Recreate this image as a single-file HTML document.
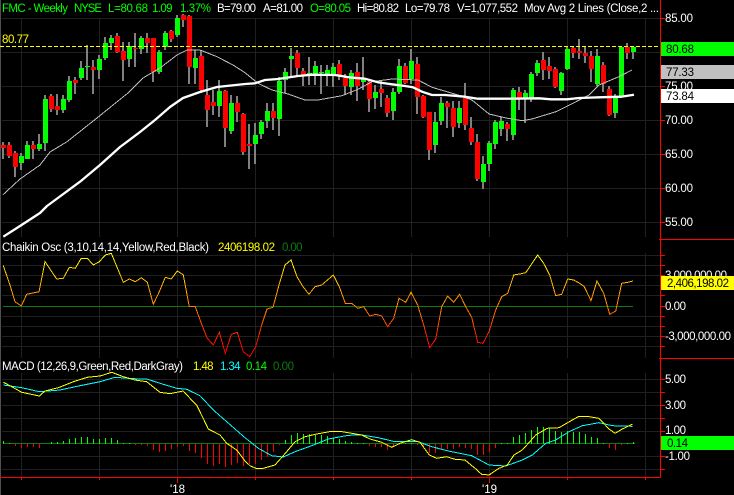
<!DOCTYPE html>
<html><head><meta charset="utf-8"><title>FMC Weekly</title>
<style>
html,body{margin:0;padding:0;background:#000;width:734px;height:495px;overflow:hidden}
svg{display:block}
text{font-family:"Liberation Sans",Arial,sans-serif;font-size:11.5px;fill:#fff}
.g{fill:#00ff00}.y{fill:#ffff00}.c{fill:#00ffff}.d{fill:#0a7a0a}.k{fill:#000}
</style></head><body>
<svg width="734" height="495" viewBox="0 0 734 495" xmlns="http://www.w3.org/2000/svg">
<defs><linearGradient id="ch" gradientUnits="userSpaceOnUse" x1="0" y1="255" x2="0" y2="350">
<stop offset="0" stop-color="#ffff00"/><stop offset=".21" stop-color="#ffc800"/><stop offset=".42" stop-color="#ff9a00"/><stop offset=".63" stop-color="#ff6a00"/><stop offset=".84" stop-color="#ff2000"/><stop offset="1" stop-color="#ff0000"/></linearGradient></defs>
<rect width="734" height="495" fill="#000"/>
<rect x="0" y="0" width="1" height="495" fill="#505050"/>
<!-- grid -->
<path shape-rendering="crispEdges" fill="none" stroke="#202020" stroke-width="1" d="
M2 18.5H660M2 52.5H660M2 86.5H660M2 120.5H660M2 154.5H660M2 188.5H660M2 222.5H660
M21.5 18V237M99.5 18V237M177.5 18V237M255.5 18V237M333.5 18V237M411.5 18V237M489.5 18V237M567.5 18V237M645.5 18V237
M2 255.5H660M2 265.5H660M2 275.5H660M2 285.5H660M2 295.5H660M2 316.5H660M2 326.5H660M2 336.5H660M2 346.5H660
M21.5 253V358M99.5 253V358M177.5 253V358M255.5 253V358M333.5 253V358M411.5 253V358M489.5 253V358M567.5 253V358M645.5 253V358
M2 379.5H660M2 392.5H660M2 405.5H660M2 418.5H660M2 431.5H660M2 456.5H660M2 469.5H660
M21.5 373V477M99.5 373V477M177.5 373V477M255.5 373V477M333.5 373V477M411.5 373V477M489.5 373V477M567.5 373V477M645.5 373V477"/>
<!-- wicks -->
<path shape-rendering="crispEdges" fill="none" stroke="#808080" stroke-width="2" d="
M3 142V159M9 142V158M15 151V177M21 153V170M27 141V159M33 141V159M39 134V151M45 95V151M51 94V112M57 94V115M63 95V113M69 76V102M75 77V94M81 61V80M87 45V80M93 60V94M99 55V79M105 37V60M111 35V50M117 33V53M123 42V81M129 42V67M135 33V67M141 36V54M147 33V53M153 38V82M159 50V74M165 31V50M171 30V42M177 15V37M183 14V27M189 15V84M195 50V84M201 50V93M207 80V127M213 90V115M219 80V117M225 90V147M231 95V134M237 96V122M243 113V155
M249 124V169M255 123V164M261 120V139M267 103V128M273 103V130M279 77V136M285 68V93M291 48V77M297 50V76M303 68V86M309 57V85M315 61V85M321 65V94M327 65V86M333 63V87M339 60V80M345 74V95M351 70V95M357 63V101M363 57V90M369 80V112M375 85V109M381 80V107M387 95V117M393 88V120M399 59V94M405 63V84M411 49V84M417 57V114M423 95V118M429 112V160M435 112V153M441 97V125M447 101V128M453 101V137M459 101V128M465 83V130M471 117V145M477 134V181M483 156V189M489 141V171M495 120V149M501 117V136M507 122V141M513 88V140M519 87V110M525 90V123M531 72V102M537 60V76M543 52V80M549 57V79M555 67V88M561 72V95M567 46V70M573 46V58M579 39V59M585 47V63M591 51V82M597 49V86M603 62V92M609 86V116M615 94V118M621 47V98M627 43V59M633 46V59"/>
<!-- red bodies -->
<path shape-rendering="crispEdges" fill="none" stroke="#ff0000" stroke-width="5" d="
M3.5 145V148M9.5 145V156M15.5 153V167M33.5 145V149M51.5 96V109M57.5 106V110M75.5 80V83M93.5 67V70M117.5 36V52M123.5 51V60M135.5 48V49M147.5 38V43M153.5 38V72M171.5 31V39M183.5 15V20M189.5 16V67M201.5 56V90M207.5 95V110M213.5 102V106M225.5 91V128M237.5 103V112M243.5 114V152M249.5 144V146M273.5 111V118M297.5 53V68M303.5 71V75M339.5 64V75M345.5 78V86M357.5 72V86M369.5 82V99M381.5 89V93M387.5 98V113M405.5 66V83M417.5 64V97M423.5 96V117M429.5 112V150M447.5 103V107M453.5 108V127M465.5 98V125M471.5 128V142M477.5 142V179M507.5 124V129M519.5 92V98M543.5 60V70M549.5 66V71M555.5 69V87M573.5 48V53M579.5 51V53M585.5 53V56M591.5 56V69M603.5 65V84M609.5 89V115M627.5 47V53"/>
<!-- green bodies -->
<path shape-rendering="crispEdges" fill="none" stroke="#00ff00" stroke-width="5" d="
M21.5 156V163M27.5 145V159M39.5 144V149M45.5 99V143M63.5 99V110M69.5 81V100M81.5 68V78M87.5 66V67M99.5 59V70M105.5 43V58M111.5 38V43M129.5 46V59M141.5 38V49M159.5 52V72M165.5 33V47M177.5 18V35M195.5 58V68M219.5 91V106M231.5 103V131M255.5 135V144M261.5 122V134M267.5 111V121M279.5 81V119M285.5 72V80M291.5 56V59M309.5 73V75M315.5 66V74M321.5 72V73M327.5 70V75M333.5 67V75M351.5 73V87M363.5 79V82M375.5 92V98M393.5 92V111M399.5 66V92M411.5 61V79M435.5 122V145M441.5 103V121M459.5 108V123M483.5 164V182M489.5 143V164M495.5 122V144M501.5 121V129M513.5 90V135M525.5 93V98M531.5 74V98M537.5 63V73M561.5 73V91M567.5 49V69M597.5 56V84M615.5 97V113M621.5 47V96M633.5 47V52"/>
<!-- thin MA -->
<polyline fill="none" stroke="#c0c0c0" stroke-width="1" shape-rendering="crispEdges" points="3,194.7 20,179 40,165 50,152 67,141.7 97,118 113,105 128,93 143,78 160,68 177,55 187,50 200,50 217,56.7 233,65 245,72.7 258,83.3 272,90 288,94 305,100 318,100 342,95.7 358,89.3 372,81.7 392,79 418,80 432,87.3 458,95 472,100 489,114 506,118 522,120.7 532,119 556,111.7 576,101.7 589,95 599,85 619,76.7 632,70"/>
<!-- thick MA -->
<polyline fill="none" stroke="#ffffff" stroke-width="2.3" stroke-linejoin="round" points="3.3,236.7 20,226 40,213 47,206 80,181.7 100,165 120,147 140,132 155,120 170,107 183,98 200,92 217,87 245,84 255,83.3 265,80 278,79 298,76 312,74.7 335,75 352,77.7 365,78.7 378,82.3 392,84.3 405,86 413,87.3 422,91.7 432,95 445,95 465,96.7 478,98.7 489,98.7 509,98.7 539,98.3 551,99.3 567,99.3 579,98 599,97.3 621,96.7 634,94.7"/>
<!-- dashed -->
<line x1="0" y1="46.5" x2="660" y2="46.5" stroke="#ffff00" stroke-width="1" stroke-dasharray="4 2" shape-rendering="crispEdges"/>
<!-- header -->
<text class="g" x="2" y="12" textLength="66">FMC - Weekly</text>
<text class="g" x="74" y="12" textLength="28">NYSE</text>
<text class="g" x="108" y="12" textLength="40">L=80.68</text>
<text class="g" x="152" y="12" textLength="20.5">1.09</text>
<text class="g" x="180" y="12" textLength="31">1.37%</text>
<text x="217" y="12" textLength="39">B=79.00</text>
<text x="263" y="12" textLength="40">A=81.00</text>
<text class="g" x="310" y="12" textLength="41">O=80.05</text>
<text x="357" y="12" textLength="42">Hi=80.82</text>
<text x="405" y="12" textLength="45">Lo=79.78</text>
<text x="457" y="12" textLength="61">V=1,077,552</text>
<text x="524" y="12" textLength="135">Mov Avg 2 Lines (Close,2 ...</text>
<text class="y" x="2" y="43" textLength="27">80.77</text>
<!-- pane 2 -->
<text x="2" y="251" textLength="207">Chaikin Osc (3,10,14,14,Yellow,Red,Black)</text>
<text class="y" x="218" y="251" textLength="57">2406198.02</text>
<text class="d" x="282" y="251" textLength="20.5">0.00</text>
<line x1="3" y1="306.5" x2="633" y2="306.5" stroke="#0a7a0a" stroke-width="1" shape-rendering="crispEdges"/>
<polyline fill="none" stroke="url(#ch)" stroke-width="1" shape-rendering="crispEdges" points="3.3,265.7 10,285 15,301.7 21.3,306 26.7,294.3 39,291.7 45,261.7 56.7,279 63.3,278.3 69.3,267.3 75.3,268.3 81.3,258.3 87.3,258.3 93.3,265 99.3,261.7 105.3,255 111.3,253.3 123.3,282.3 129.3,279 135.3,281.7 141.3,277.7 147.3,282.3 153.3,304.3 159.3,291.7 165.3,277.3 171.3,279 177.3,271 183.3,275 189.3,306.7 195.3,306.7 201.3,323.3 207.3,338.3 213.3,345 219.3,332.3 225.3,353.3 231.3,334.3 237.3,332.3 243.3,351.7 249.7,356.7 255.7,346.7 261.7,325 267,309 273,307.3 279,285 285,265 291,260 297,276.7 303,286.7 309,294.3 315,286.7 321.7,285 333.3,275 339.3,286.7 345.3,303.3 351.7,303.3 357.7,308.3 363.7,306.7 369.7,316 375.7,314.3 381.7,316 387.7,326.7 393.7,318.3 399,298.3 405.7,302.3 411,292.3 417.7,305 423.7,325 429.7,347.7 435.7,339 441.7,306.7 447.7,296 453.7,302.3 459.7,294.3 465.7,306.7 471.7,317.3 477.7,342.3 483,343.3 489,331.7 495.7,310 501.7,296.7 507.7,293.3 513.7,275 519.7,274 525.7,272.7 537.7,255 543.7,263.3 549.7,275 555.7,295.7 561.7,294.3 567.7,279 573.7,280 579.7,283.3 584.3,286.7 591,300.7 597,281 603.7,293.3 609.7,314.3 615.7,311 621.7,283.3 627.7,282.3 633,281"/>
<!-- pane 3 -->
<text x="2" y="370" textLength="181">MACD (12,26,9,Green,Red,DarkGray)</text>
<text class="y" x="193" y="370" textLength="20.5">1.48</text>
<text class="c" x="220" y="370" textLength="20.5">1.34</text>
<text class="g" x="246" y="370" textLength="21">0.14</text>
<text class="d" x="273" y="370" textLength="21">0.00</text>
<line x1="3" y1="443.5" x2="635" y2="443.5" stroke="#0a7a0a" stroke-width="1" shape-rendering="crispEdges"/>
<path shape-rendering="crispEdges" fill="none" stroke="#00ff00" stroke-width="1" d="M3.5 441V444M9.5 443V444M51.5 442V444M57.5 442V444M63.5 441V444M69.5 439V444M75.5 438V444M81.5 437V444M87.5 437V444M93.5 439V444M99.5 439V444M105.5 438V444M111.5 438V444M117.5 440V444M123.5 443V444M129.5 443V444M285.5 440V444M291.5 435V444M297.5 433V444M303.5 434V444M309.5 434V444M315.5 435V444M321.5 435V444M327.5 436V444M333.5 438V444M339.5 439V444M345.5 441V444M351.5 442V444M357.5 443V444M363.5 443V444M405.5 443V444M411.5 443V444M501.5 443V444M507.5 443V444M513.5 437V444M519.5 435V444M525.5 433V444M531.5 430V444M537.5 427V444M543.5 427V444M549.5 428V444M555.5 431V444M561.5 432V444M567.5 431V444M573.5 432V444M579.5 432V444M585.5 434V444M591.5 437V444M597.5 438V444M603.5 443V444M627.5 443V444M633.5 442V444"/>
<path shape-rendering="crispEdges" fill="none" stroke="#ff0000" stroke-width="1" d="M15.5 444V446M21.5 444V448M27.5 444V447M33.5 444V447M39.5 444V448M135.5 444V445M141.5 444V445M147.5 444V446M153.5 444V450M159.5 444V452M165.5 444V451M171.5 444V449M177.5 444V447M183.5 444V446M189.5 444V451M195.5 444V453M201.5 444V458M207.5 444V464M213.5 444V466M219.5 444V464M225.5 444V467M231.5 444V465M237.5 444V463M243.5 444V466M249.5 444V464M255.5 444V464M261.5 444V460M267.5 444V457M273.5 444V452M279.5 444V445M369.5 444V446M375.5 444V447M381.5 444V447M387.5 444V450M393.5 444V447M399.5 444V445M417.5 444V445M423.5 444V447M429.5 444V453M435.5 444V453M441.5 444V449M447.5 444V449M453.5 444V449M459.5 444V447M465.5 444V448M471.5 444V449M477.5 444V455M483.5 444V455M489.5 444V452M495.5 444V448M609.5 444V448M615.5 444V450M621.5 444V445"/>
<polyline fill="none" stroke="#00ffff" stroke-width="1" shape-rendering="crispEdges" points="3.3,385 21.7,387.7 39.3,391.7 60,390 80,385.7 100,381.7 115,377.3 133.3,378.7 146.7,379 163.3,384.3 176.7,388.3 186.7,389.3 200,395.7 213.3,410 245,437.7 258.3,448.3 271.7,455.7 283.3,457 295,451.7 311.7,445.7 328.3,439 348.3,435.3 361.7,435 378.3,437.7 395,441.7 418.3,441.7 431.7,446.7 448.3,451 471.7,455.7 489,465 505.7,466 522.3,460 532.3,455 545.7,443.3 555.7,440 569,431.7 582.3,425.7 599,422.7 612.3,425.7 632.3,426.3"/>
<polyline fill="none" stroke="#ffff00" stroke-width="1" shape-rendering="crispEdges" points="3.3,382.3 10,385.7 21.7,392.3 39.3,396 45,391 58.3,387.7 73.3,381.7 87.3,377.3 100,376 111.7,372.3 123.3,376.7 135,380 146.7,381.7 160,392.3 170,393.7 183.3,391 190,398.3 196.7,405 208.3,429 220,435 226.7,443.3 236.7,450 245,461 250,465.7 256.7,468.7 263.3,468.3 275,465 286.7,451.7 295,441.7 305,436.7 316.7,434 331.7,431.3 340,431.3 351.7,433.3 361.7,435 370,439 381.7,442.3 391.7,447.3 400,443.3 411.7,439.7 420,442.3 429.3,455 436.7,458.3 446.7,456.7 455,459.3 465,460 475,468.3 481.7,474.3 489,475 499,468.3 507.3,465 514,455 522.3,450 535.7,435 547.3,428.3 559,427.7 572.3,420 579,416.3 589,416.7 599,418.3 609,429 615,433.3 622.3,429 632.3,424.3"/>
<!-- axes -->
<path shape-rendering="crispEdges" fill="none" stroke="#ff0000" stroke-width="1" d="M660.5 0V477.5M0 477.5H660.5M659 239.5H734M659 358.5H734
M660 18.5H665M660 52.5H665M660 86.5H665M660 120.5H665M660 154.5H665M660 188.5H665M660 222.5H665
M660 255.5H665M660 265.5H665M660 275.5H665M660 285.5H665M660 295.5H665M660 306.5H665M660 316.5H665M660 326.5H665M660 336.5H665M660 346.5H665
M660 379.5H665M660 392.5H665M660 405.5H665M660 418.5H665M660 431.5H665M660 443.5H665M660 456.5H665M660 469.5H665
M21.5 478V480M99.5 478V480M255.5 478V480M333.5 478V480M411.5 478V480M567.5 478V480M645.5 478V480M177.5 478V483M489.5 478V483"/>
<text x="665" y="22" textLength="28">85.00</text>
<text x="665" y="90" textLength="28">75.00</text>
<text x="665" y="124" textLength="28">70.00</text>
<text x="665" y="158" textLength="28">65.00</text>
<text x="665" y="192" textLength="28">60.00</text>
<text x="665" y="226" textLength="28">55.00</text>
<rect x="661" y="42" width="73" height="14" fill="#00ff00"/>
<text class="k" x="666" y="53" textLength="28">80.68</text>
<rect x="661" y="65" width="73" height="14" fill="#c0c0c0"/>
<text class="k" x="666" y="76" textLength="28">77.33</text>
<rect x="661" y="89" width="73" height="14" fill="#ffffff"/>
<text class="k" x="666" y="100" textLength="28">73.84</text>
<text x="665" y="279" textLength="62">3,000,000.00</text>
<rect x="661" y="276" width="73" height="14" fill="#ffff00"/>
<text class="k" x="667" y="287" textLength="62">2,406,198.02</text>
<text x="665" y="310" textLength="21">0.00</text>
<text x="665" y="340" textLength="66">-3,000,000.00</text>
<text x="665" y="383" textLength="21">5.00</text>
<text x="665" y="409" textLength="21">3.00</text>
<text x="665" y="434" textLength="21">1.00</text>
<rect x="661" y="436" width="73" height="14" fill="#00ff00"/>
<text class="k" x="667" y="447" textLength="21">0.14</text>
<text x="665" y="460" textLength="25">-1.00</text>
<text x="170" y="493" textLength="15">'18</text>
<text x="482" y="493" textLength="15">'19</text>
</svg>
</body></html>
